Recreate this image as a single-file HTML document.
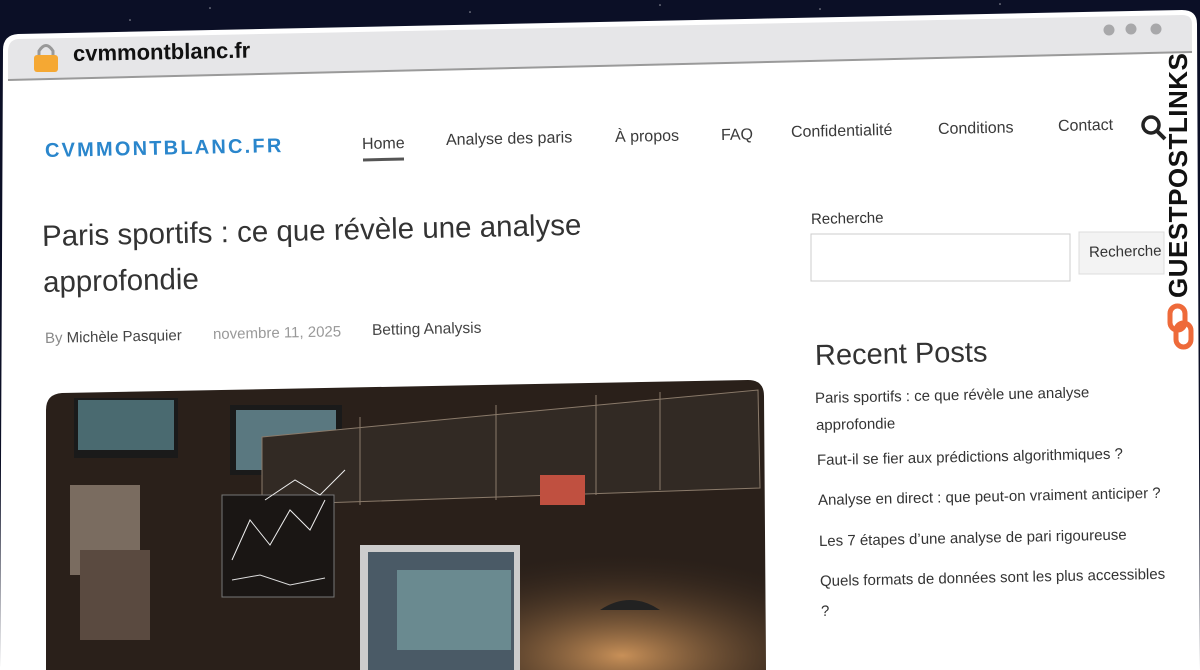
<!DOCTYPE html>
<html><head><meta charset="utf-8"><style>
html,body{margin:0;padding:0;width:1200px;height:670px;overflow:hidden;background:#0b0f26;font-family:"Liberation Sans",sans-serif}
.t{position:absolute;white-space:nowrap;transform:rotate(-1.2deg);transform-origin:left center;color:#333}
.nav{font-size:16px;color:#3a3a3a}
.li{font-size:15px;color:#333}
</style></head><body>
<svg width="1200" height="670" style="position:absolute;left:0;top:0">
<defs>
<radialGradient id="lamp" cx="0.8" cy="0.95" r="0.35"><stop offset="0" stop-color="#c89058"/><stop offset="1" stop-color="#3a2a1e" stop-opacity="0"/></radialGradient>
</defs>
<g fill="#fff" opacity=".6"><circle cx="210" cy="8" r=".8"/><circle cx="470" cy="12" r=".8"/><circle cx="660" cy="5" r=".8"/><circle cx="820" cy="9" r=".8"/><circle cx="130" cy="20" r=".8"/><circle cx="1000" cy="4" r=".8"/></g>
<path d="M3,50 Q3,35 18,34 L1182,10 Q1197,10 1197,24 L1200,670 L0,670 Z" fill="#fff"/>
<path d="M8,52 Q8,40 18,39 L1182,15 Q1192,15 1192,24 L1192,52 L8,80 Z" fill="#e6e6e8"/>
<path d="M8,80 L1192,52" stroke="#9a9a9a" stroke-width="2"/>
<circle cx="1109" cy="30" r="5.5" fill="#a8a8aa"/><circle cx="1131" cy="29" r="5.5" fill="#a8a8aa"/><circle cx="1156" cy="29" r="5.5" fill="#a8a8aa"/>
<path d="M39,57 L39,51 Q46,40 53,51 L53,57" stroke="#999" stroke-width="3" fill="none"/>
<rect x="34" y="55" width="24" height="17" rx="3" fill="#f5a833"/>
<circle cx="1151" cy="125" r="8" stroke="#222" stroke-width="3.5" fill="none"/>
<path d="M1157,131 L1165,139" stroke="#222" stroke-width="4"/>
<path d="M363,160 L404,159" stroke="#555" stroke-width="3"/>
<rect x="811" y="234" width="259" height="47" fill="#fff" stroke="#ccc"/>
<rect x="1079" y="232" width="85" height="42" fill="#f3f3f3" stroke="#ddd"/>
<path d="M46,410 Q46,394 62,393 L748,380 Q764,380 764,396 L766,670 L46,670 Z" fill="#2a201a"/>
<path d="M46,410 Q46,394 62,393 L748,380 Q764,380 764,396 L766,670 L46,670 Z" fill="url(#lamp)"/>
<rect x="74" y="398" width="104" height="60" fill="#1a1a1a"/><rect x="78" y="400" width="96" height="50" fill="#4a6a70"/>
<rect x="230" y="405" width="112" height="70" fill="#1a1a1a"/><rect x="236" y="410" width="100" height="60" fill="#5a7880"/>
<path d="M262,437 L460,418 L758,390 L760,488 L262,505 Z" fill="#322a24" stroke="#8a7a6a"/>
<path d="M360,417 L360,505 M496,405 L496,500 M596,395 L596,495 M660,392 L660,490" stroke="#8a7a6a"/>
<rect x="222" y="495" width="112" height="102" fill="#1a1614" stroke="#777"/>
<path d="M232,560 L250,520 L270,545 L290,510 L310,530 L325,500" stroke="#eee" fill="none"/>
<path d="M232,580 L260,575 L290,585 L325,578" stroke="#ddd" fill="none"/>
<path d="M265,500 L295,480 L320,495 L345,470" stroke="#eee" fill="none"/>
<rect x="360" y="545" width="160" height="125" fill="#ccc"/><rect x="368" y="552" width="146" height="118" fill="#4a5a66"/>
<rect x="397" y="570" width="114" height="80" fill="#6a8a90"/>
<rect x="70" y="485" width="70" height="90" fill="#7a6c60"/><rect x="80" y="550" width="70" height="90" fill="#5a4a40"/>
<rect x="540" y="475" width="45" height="30" fill="#c05040"/>
<path d="M600,610 Q630,590 660,610 Z" fill="#222"/>
</svg>
<div class="t" style="left:73px;top:41px;font-size:22px;color:#111;font-weight:bold;transform:rotate(-1.1deg)">cvmmontblanc.fr</div>
<div class="t" style="left:45px;top:140px;font-size:20px;color:#2a86cc;font-weight:bold;letter-spacing:2.2px">CVMMONTBLANC.FR</div>
<div class="t nav" style="left:362px;top:136px">Home</div>
<div class="t nav" style="left:446px;top:132px">Analyse des paris</div>
<div class="t nav" style="left:615px;top:129px">À propos</div>
<div class="t nav" style="left:721px;top:127px">FAQ</div>
<div class="t nav" style="left:791px;top:124px">Confidentialité</div>
<div class="t nav" style="left:938px;top:121px">Conditions</div>
<div class="t nav" style="left:1058px;top:118px">Contact</div>
<div class="t" style="left:42px;top:220px;font-size:29.5px">Paris sportifs : ce que révèle une analyse</div>
<div class="t" style="left:43px;top:266px;font-size:29.5px">approfondie</div>
<div class="t" style="left:45px;top:330px;font-size:15px;color:#888">By <span style="color:#444">Michèle Pasquier</span></div>
<div class="t" style="left:213px;top:326px;font-size:15px;color:#999">novembre 11, 2025</div>
<div class="t" style="left:372px;top:322px;font-size:15.5px;color:#444">Betting Analysis</div>
<div class="t" style="left:811px;top:211px;font-size:15px">Recherche</div>
<div class="t" style="left:1089px;top:244px;font-size:15px">Recherche</div>
<div class="t" style="left:815px;top:340px;font-size:29px">Recent Posts</div>
<div class="t li" style="left:815px;top:390px">Paris sportifs : ce que révèle une analyse</div>
<div class="t li" style="left:816px;top:417px">approfondie</div>
<div class="t li" style="left:817px;top:452px">Faut-il se fier aux prédictions algorithmiques ?</div>
<div class="t li" style="left:818px;top:492px">Analyse en direct : que peut-on vraiment anticiper ?</div>
<div class="t li" style="left:819px;top:533px">Les 7 étapes d’une analyse de pari rigoureuse</div>
<div class="t li" style="left:820px;top:573px">Quels formats de données sont les plus accessibles</div>
<div class="t li" style="left:821px;top:603px">?</div>
<div style="position:absolute;left:1163px;top:298px;transform:rotate(-90deg);transform-origin:left top;font-size:26px;font-weight:900;color:#111;letter-spacing:0.5px;white-space:nowrap">GUESTPOSTLINKS</div>
<svg width="30" height="50" style="position:absolute;left:1166px;top:303px"><g fill="none" stroke="#ee6a3a" stroke-width="5"><rect x="4" y="3" width="15" height="24" rx="7.5"/><rect x="10" y="20" width="15" height="24" rx="7.5"/></g></svg>
</body></html>
